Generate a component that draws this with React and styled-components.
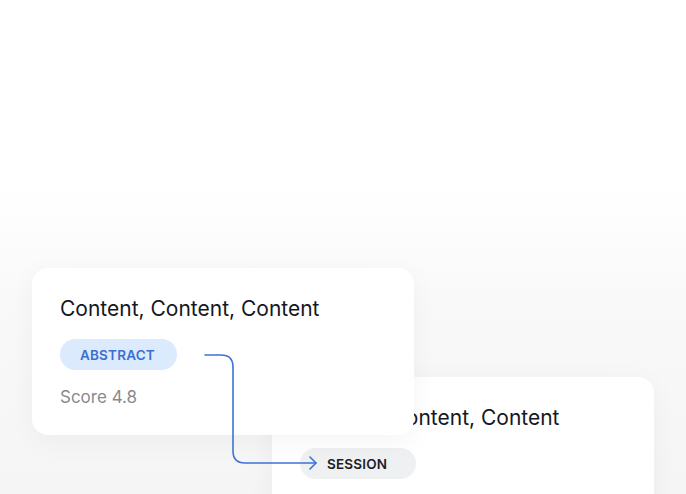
import React from "react"
import styled, { createGlobalStyle } from "styled-components"

const GlobalStyle = createGlobalStyle`
  html, body {
    margin: 0;
    padding: 0;
  }
  body {
    font-family: Inter, "Noto Sans", sans-serif;
    -webkit-font-smoothing: antialiased;
  }
`

const cards = [
  { id: "a", title: "Content, Content, Content", tag: "ABSTRACT", tone: "blue", score: "4.8", x: 32, y: 268 },
  { id: "b", title: "Content, Content, Content", tag: "SESSION", tone: "grey", x: 272, y: 377 },
]

const Card = ({ card }) => (
  <CardBox style={{ left: card.x, top: card.y, zIndex: card.id === "a" ? 2 : 1 }}>
    <Title>{card.title}</Title>
    <Tag $tone={card.tone}>{card.tag}</Tag>
    {card.score && <Score>Score {card.score}</Score>}
  </CardBox>
)

export default function App() {
  return (
    <>
      <GlobalStyle />
      <Canvas>
        {cards.slice().reverse().map((c) => (
          <Card key={c.id} card={c} />
        ))}
        <Connector viewBox="0 0 686 494" width="686" height="494">
          <path
            d="M205 355 H221 Q233 355 233 367 V451 Q233 463 245 463 H316"
            fill="none"
            stroke="#3d72d6"
            strokeWidth="1.6"
            strokeLinecap="round"
          />
          <path
            d="M310 457 L316 463 L310 469"
            fill="none"
            stroke="#3d72d6"
            strokeWidth="1.6"
            strokeLinecap="round"
            strokeLinejoin="round"
          />
        </Connector>
      </Canvas>
    </>
  )
}

const Canvas = styled.div`
  position: relative;
  width: 686px;
  height: 494px;
  overflow: hidden;
  background: linear-gradient(180deg, #ffffff 0%, #ffffff 38%, #f9f9fa 60%, #f5f5f6 100%);
`

const CardBox = styled.div`
  position: absolute;
  width: 382px;
  min-height: 167px;
  box-sizing: border-box;
  padding: 28px 28px 27px;
  display: flex;
  flex-direction: column;
  align-items: flex-start;
  background: #ffffff;
  border-radius: 16px;
  box-shadow: 0 6px 28px rgba(20, 24, 40, 0.045);
`

const Title = styled.div`
  font-size: 21px;
  line-height: 26px;
  font-weight: 400;
  color: #151822;
`

const Tag = styled.span`
  margin-top: 17px;
  height: 31px;
  display: inline-flex;
  align-items: center;
  padding: 0 ${(p) => (p.$tone === "blue" ? "22px" : "29px")} 0 ${(p) => (p.$tone === "blue" ? "20px" : "27px")};
  border-radius: 16px;
  font-size: 13.5px;
  font-weight: 600;
  letter-spacing: 0.2px;
  background: ${(p) => (p.$tone === "blue" ? "#dceafd" : "#eff0f2")};
  color: ${(p) => (p.$tone === "blue" ? "#3b6fd1" : "#1b1e27")};
`

const Score = styled.div`
  margin-top: 16px;
  font-size: 17px;
  line-height: 22px;
  color: #8a8a8d;
`

const Connector = styled.svg`
  position: absolute;
  left: 0;
  top: 0;
  z-index: 3;
  pointer-events: none;
`
